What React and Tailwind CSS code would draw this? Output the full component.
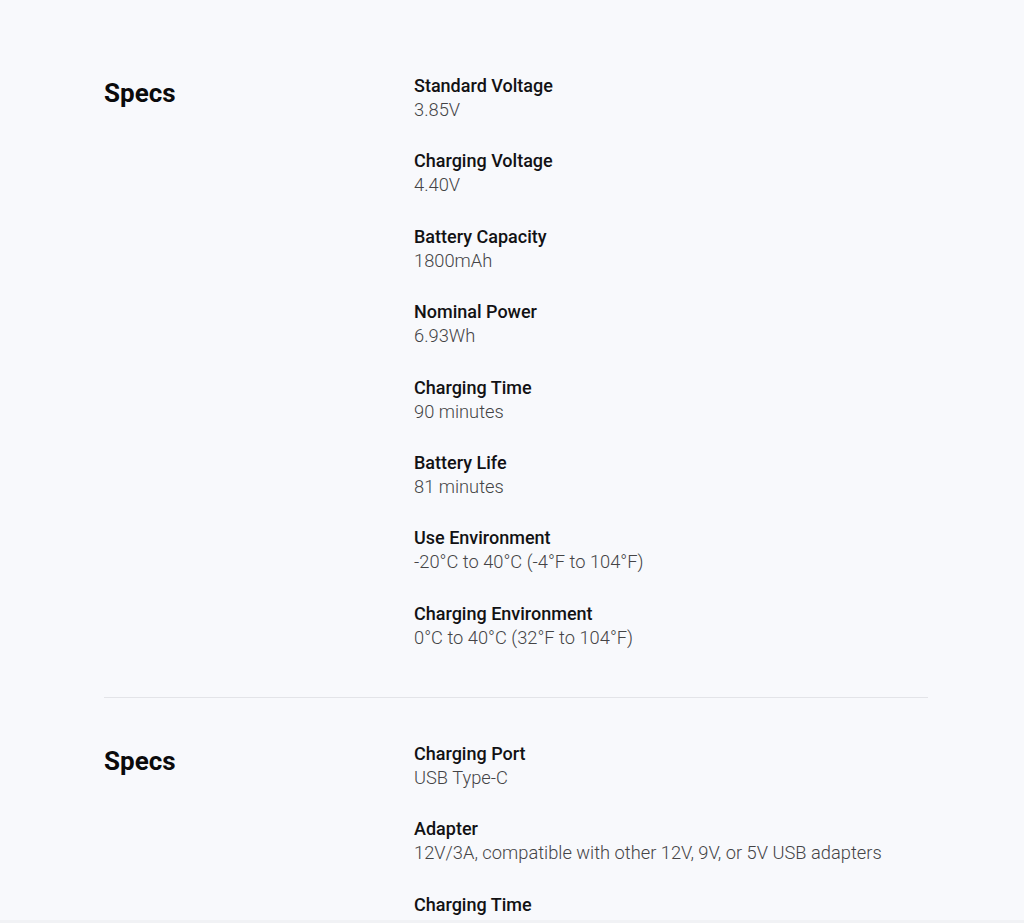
const SECTIONS = [
  {
    title: "Specs",
    items: [
      ["Standard Voltage", "3.85V"],
      ["Charging Voltage", "4.40V"],
      ["Battery Capacity", "1800mAh"],
      ["Nominal Power", "6.93Wh"],
      ["Charging Time", "90 minutes"],
      ["Battery Life", "81 minutes"],
      ["Use Environment", "-20°C to 40°C (-4°F to 104°F)"],
      ["Charging Environment", "0°C to 40°C (32°F to 104°F)"],
    ],
  },
  {
    title: "Specs",
    items: [
      ["Charging Port", "USB Type-C"],
      ["Adapter", "12V/3A, compatible with other 12V, 9V, or 5V USB adapters"],
      ["Charging Time", "90 minutes (when charged with the 12V/3A adapter)"],
    ],
  },
];

function SpecSection({ title, items, last }) {
  return (
    <section
      className={`flex pt-[44px] ${last ? "pb-20" : "pb-[47px] border-b border-[#e3e4e8]"}`}
    >
      <h2 className="w-[310px] shrink-0 pt-[3px] text-[26px] leading-[32px] font-bold text-[#0b0b0c]">
        {title}
      </h2>
      <div className="flex flex-col gap-[27.4px]">
        {items.map(([label, value]) => (
          <div key={label}>
            <p className="text-[18px] leading-6 font-medium text-[#121214]">{label}</p>
            <p className="text-[18.3px] leading-6 font-light text-[#444446]">{value}</p>
          </div>
        ))}
      </div>
    </section>
  );
}

export default function App() {
  return (
    <div className="min-h-screen bg-[#f8f9fc] font-['Roboto',sans-serif]">
      <div className="ml-[104px] w-[824px] pt-[30px]">
        {SECTIONS.map((s, i) => (
          <SpecSection key={i} title={s.title} items={s.items} last={i === SECTIONS.length - 1} />
        ))}
      </div>
      {/* bottom edge strip */}
      <div className="fixed bottom-0 left-0 right-0 h-[3px] bg-[#f1f2f5]" />
    </div>
  );
}
